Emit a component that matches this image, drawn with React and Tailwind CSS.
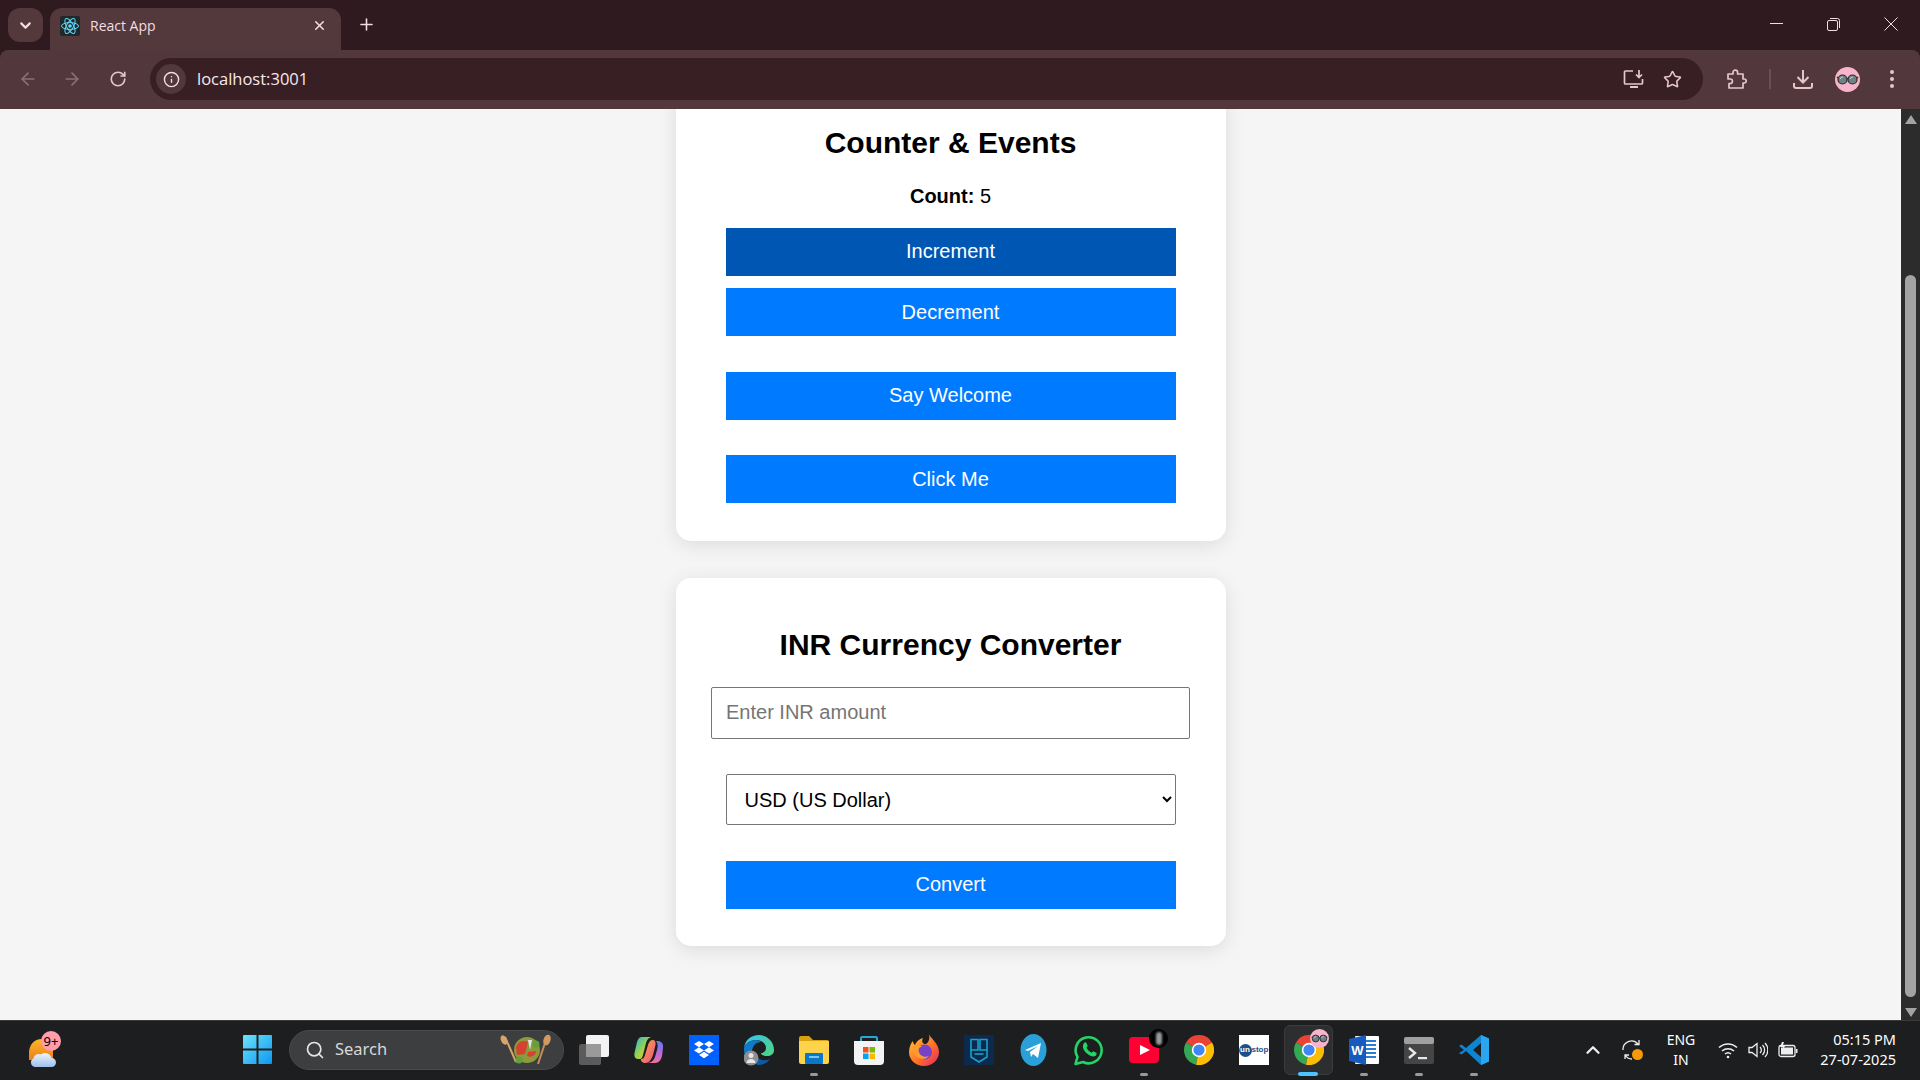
import React from "react";
import { ArrowLeft, ArrowRight, RotateCw, Info, Star, X, Plus, ChevronDown, ChevronUp, Search } from "lucide-react";

const Glasses = ({ size = 25 }) => (
  <svg width={size} height={size} viewBox="0 0 25 25">
    <circle cx="12.5" cy="12.5" r="12.5" fill="#f9b4cd" />
    <circle cx="7.5" cy="12.5" r="4.5" fill="#6f8086" stroke="#2a2a2a" strokeWidth="1.2" />
    <circle cx="17.5" cy="12.5" r="4.5" fill="#6f8086" stroke="#2a2a2a" strokeWidth="1.2" />
    <path d="M12 11.5h1.5M2 11l1-1M23 11l-1-1" stroke="#2a2a2a" strokeWidth="1.2" />
    <path d="M5 12a3 3 0 0 1 3-2M15 12a3 3 0 0 1 3-2" stroke="#cfdadd" strokeWidth="1" fill="none" />
  </svg>
);

const ReactLogo = () => (
  <svg width="20" height="20" viewBox="0 0 20 20">
    <rect width="20" height="20" rx="2" fill="#20282c" />
    <g fill="none" stroke="#61dafb" strokeWidth="1">
      <ellipse cx="10" cy="10" rx="8.5" ry="3.4" />
      <ellipse cx="10" cy="10" rx="8.5" ry="3.4" transform="rotate(60 10 10)" />
      <ellipse cx="10" cy="10" rx="8.5" ry="3.4" transform="rotate(120 10 10)" />
    </g>
    <circle cx="10" cy="10" r="1.8" fill="#61dafb" />
  </svg>
);

const InstallIcon = () => (
  <svg width="22" height="20" viewBox="0 0 22 20" fill="none" stroke="#e6c6cb" strokeWidth="1.7">
    <path d="M10 2H2.500A1 1 0 0 0 1.500 3v11a1 1 0 0 0 1 1h16a1 1 0 0 0 1-1v-4" />
    <path d="M16 1v7M13 5.500l3 3 3-3" />
    <path d="M7 18h8" strokeWidth="2" />
  </svg>
);

const PuzzleIcon = () => (
  <svg width="21" height="21" viewBox="0 0 21 21" fill="none" stroke="#e6c6cb" strokeWidth="1.7" strokeLinejoin="round">
    <path d="M2 5h5V3.500a2.300 2.300 0 0 1 4.600 0V5H17v5h1.200a2 2 0 0 1 0 4H17v5H3v-4.500h1.200a2.200 2.200 0 0 0 0-4.500H2Z" />
  </svg>
);

const DownloadIcon = () => (
  <svg width="22" height="22" viewBox="0 0 22 22" fill="none" stroke="#e6c6cb" strokeWidth="2">
    <path d="M11 2v12M5.500 9l5.500 5.500L16.500 9" />
    <path d="M2 15v3a2 2 0 0 0 2 2h14a2 2 0 0 0 2-2v-3" />
  </svg>
);

const Dots = () => (
  <svg width="6" height="20" viewBox="0 0 6 20" fill="#e6c6cb">
    <circle cx="3" cy="3" r="2" /><circle cx="3" cy="10" r="2" /><circle cx="3" cy="17" r="2" />
  </svg>
);

const ChromeLogo = ({ size = 30 }) => (
  <svg width={size} height={size} viewBox="0 0 30 30">
    <path d="M15 15 2 7.500A15 15 0 0 1 28 7.500Z" fill="#ea4335" />
    <path d="M15 15 2 7.500A15 15 0 0 0 12 29.700Z" fill="#34a853" />
    <path d="M15 15 28 7.500A15 15 0 0 1 12 29.700Z" fill="#fbbc04" />
    <circle cx="15" cy="15" r="7.200" fill="#fff" />
    <circle cx="15" cy="15" r="5.600" fill="#4285f4" />
  </svg>
);

const Start = () => (
  <svg width="29" height="29" viewBox="0 0 29 29">
    <defs>
      <linearGradient id="st" x1="0" y1="0" x2="1" y2="1"><stop offset="0" stopColor="#6ee2fb" /><stop offset="1" stopColor="#0c98f0" /></linearGradient>
    </defs>
    <path d="M0 1a1 1 0 0 1 1-1h12.500v13.500H0Zm15.500-1H28a1 1 0 0 1 1 1v12.500H15.500ZM0 15.500h13.500V29H1a1 1 0 0 1-1-1Zm15.500 0H29V28a1 1 0 0 1-1 1H15.500Z" fill="url(#st)" />
  </svg>
);

const Weather = () => (
  <svg width="28" height="30" viewBox="0 0 28 30">
    <defs>
      <linearGradient id="sun" x1="0" y1="0" x2="0" y2="1"><stop offset="0" stopColor="#fbb62c" /><stop offset="1" stopColor="#ee7f1a" /></linearGradient>
      <linearGradient id="cl" x1="0" y1="0" x2="0" y2="1"><stop offset="0" stopColor="#eef4fd" /><stop offset="1" stopColor="#9dc0ee" /></linearGradient>
    </defs>
    <path d="M13 1C5 1 0 7 0 15v7h24V8H17Z" fill="url(#sun)" />
    <path d="M6 29a4.500 4.500 0 0 1-1.500-8.500 5 5 0 0 1 7-4 7 7 0 0 1 11 3.500 4.500 4.500 0 0 1 0 9Z" fill="url(#cl)" />
  </svg>
);

const Salad = () => (
  <svg width="52" height="32" viewBox="0 0 52 32">
    <path d="M5 3 16 28" stroke="#d9a46a" strokeWidth="2" />
    <ellipse cx="4" cy="6" rx="3" ry="5" fill="#d9a46a" transform="rotate(-25 4 6)" />
    <path d="M47 3 38 30" stroke="#c98d52" strokeWidth="2" />
    <ellipse cx="47" cy="6" rx="3.500" ry="5.500" fill="#d39a60" transform="rotate(18 47 6)" />
    <circle cx="27" cy="16" r="13" fill="#8b9a3c" />
    <path d="M16 14a8 8 0 0 1 12-6l-3 12-8 1Z" fill="#d8412f" />
    <path d="M27 22a6 6 0 0 0 9-5l-8 1Z" fill="#d8412f" />
    <path d="M28 6l2 10 2-10Z" fill="#e4e4ea" />
    <circle cx="19" cy="26" r="3.500" fill="#5fa13b" />
    <circle cx="36" cy="10" r="3.500" fill="#5fa13b" />
  </svg>
);

const TaskView = () => (
  <svg width="30" height="30" viewBox="0 0 30 30">
    <rect x="0" y="9" width="22" height="21" rx="2" fill="#5b5b5b" />
    <rect x="7" y="0" width="23" height="22" rx="2" fill="#f3f3f3" />
    <rect x="7" y="9" width="15" height="13" fill="#9a9a9a" />
  </svg>
);

const Copilot = () => (
  <svg width="29" height="26" viewBox="0 0 29 26">
    <defs>
      <linearGradient id="c1" x1="0" y1="0" x2="1" y2="1"><stop offset="0" stopColor="#1eb6e8" /><stop offset="0.5" stopColor="#9ad24a" /><stop offset="1" stopColor="#f8c23c" /></linearGradient>
      <linearGradient id="c2" x1="0" y1="0" x2="0" y2="1"><stop offset="0" stopColor="#5a7df0" /><stop offset="0.5" stopColor="#b468e0" /><stop offset="1" stopColor="#f0709a" /></linearGradient>
      <linearGradient id="c3" x1="0" y1="0" x2="1" y2="1"><stop offset="0" stopColor="#f8a83a" /><stop offset="1" stopColor="#f0508a" /></linearGradient>
    </defs>
    <path d="M8 0h9c-3 1-4 3-5 6l-3 12c-.5 2-1.500 4-3 4H4c-3 0-4-3-3.500-6L3 5C4 2 5 0 8 0Z" fill="url(#c1)" />
    <path d="M13 26h8c4 0 6-3 7-7l1-8c.5-4-1-6-4-7h-3c2 3 2 5 1 9l-2 7c-1 3-4 6-8 6Z" fill="url(#c2)" />
    <path d="M7 22c2 0 3-1 4-4l3-10c1-3 2-5 5-5 2 0 3 2 2.500 5l-2 8c-1 5-4 10-8 10-3 0-5-2-4.500-4Z" fill="url(#c3)" />
  </svg>
);

const Dropbox = () => (
  <svg width="30" height="30" viewBox="0 0 30 30">
    <rect width="30" height="30" fill="#0061fe" />
    <path d="M10 6l5 3-5 3.200L5 9Zm10 0 5 3-5 3.200L15 9ZM5 15.400l5-3.200 5 3.200-5 3.200Zm15-3.200 5 3.200-5 3.200-5-3.200ZM10 20l5-3.200 5 3.200-5 3.200Z" fill="#fff" />
  </svg>
);

const Edge = () => (
  <svg width="30" height="31" viewBox="0 0 30 31">
    <defs>
      <linearGradient id="e1" x1="0" y1="0" x2="1" y2="1"><stop offset="0" stopColor="#35c1f1" /><stop offset="1" stopColor="#50d67a" /></linearGradient>
    </defs>
    <path d="M15 0a15 15 0 0 1 15 15c0 4-3 6-7 6-3 0-6-1-6-3 3 0 5-2 5-5 0-5-5-8-10-8C6 5 1 9 0 13 1 5 7 0 15 0Z" fill="url(#e1)" />
    <path d="M0 13c1-4 6-8 12-8 2 0 4 1 5 2-5 0-9 4-9 10 0 5 3 10 8 12C7 30 0 24 0 15Z" fill="#1079c8" />
    <path d="M10 18c2 6 9 9 16 6-3 4-7 6-11 6-3 0-5-2-6-5Z" fill="#0d5aa7" />
    <circle cx="7" cy="23" r="7.500" fill="#8e8e8e" />
    <circle cx="7" cy="20.500" r="2.500" fill="#e5e5e5" />
    <path d="M2.500 28a4.500 4 0 0 1 9 0Z" fill="#e5e5e5" />
  </svg>
);

const Folder = () => (
  <svg width="30" height="28" viewBox="0 0 30 28">
    <path d="M0 2a2 2 0 0 1 2-2h8l4 4H28a2 2 0 0 1 2 2v4H0Z" fill="#d9a10f" />
    <path d="M0 5h30v21a2 2 0 0 1-2 2H2a2 2 0 0 1-2-2Z" fill="#fcd34a" />
    <rect x="6" y="17" width="18" height="11" rx="1" fill="#0a78c9" />
    <rect x="10" y="20" width="10" height="2" fill="#7fc4ef" />
  </svg>
);

const Store = () => (
  <svg width="30" height="30" viewBox="0 0 30 30">
    <path d="M7 7V3a1 1 0 0 1 1-1h14a1 1 0 0 1 1 1v4" fill="none" stroke="#27a6dc" strokeWidth="2" />
    <path d="M0 6h30v20a4 4 0 0 1-4 4H4a4 4 0 0 1-4-4Z" fill="#f3f3f3" />
    <rect x="9" y="12" width="5.500" height="5.500" fill="#f25022" />
    <rect x="15.500" y="12" width="5.500" height="5.500" fill="#7fba00" />
    <rect x="9" y="18.500" width="5.500" height="5.500" fill="#00a4ef" />
    <rect x="15.500" y="18.500" width="5.500" height="5.500" fill="#ffb900" />
  </svg>
);

const Firefox = () => (
  <svg width="30" height="32" viewBox="0 0 30 32">
    <defs>
      <linearGradient id="f1" x1="0" y1="0" x2="1" y2="1"><stop offset="0" stopColor="#ffcb33" /><stop offset="0.6" stopColor="#ff6a2b" /><stop offset="1" stopColor="#e6226b" /></linearGradient>
    </defs>
    <path d="M20 0c1 4 10 9 10 18a15 14 0 0 1-30 0C0 13 2 9 4 7c0 2 1 3 2 4 1-3 4-6 8-7-2 4 0 6 3 6 3-2 4-6 3-10Z" fill="url(#f1)" />
    <circle cx="15.500" cy="18" r="7.500" fill="#7542c9" />
    <path d="M4 14c3-3 8-3 9-1-3 0-4 2-3 5 1 4 6 6 10 4-4 5-12 3-15-2-1-2-1-4-1-6Z" fill="#ff9a2e" />
  </svg>
);

const Shield = () => (
  <svg width="30" height="30" viewBox="0 0 30 30">
    <rect width="30" height="30" fill="#0c2a4d" />
    <g fill="none" stroke="#17a2c9" strokeWidth="1.600">
      <path d="M7 9V4.500h7V15H7Zm9 6V4.500h7V15h-7Z" />
      <path d="M7 15v7l8 5 8-5v-7" />
      <path d="M10.500 19h9" />
    </g>
  </svg>
);

const Telegram = () => (
  <svg width="27" height="32" viewBox="0 0 27 32">
    <ellipse cx="13.500" cy="16" rx="13" ry="16" fill="#2a9fd8" />
    <path d="M5 16l16-7-3 15-5-4-2 3-1-5 8-6-10 5Z" fill="#fff" />
  </svg>
);

const WhatsApp = () => (
  <svg width="30" height="31" viewBox="0 0 30 31" fill="none">
    <path d="M1.500 29l2-7A13 13 0 1 1 9 27Z" stroke="#25d366" strokeWidth="2.600" strokeLinejoin="round" />
    <path d="M10 8c1-1 2-1 2.500 0l1.200 3-1.200 1.700c1 2 3 4 5 5l1.700-1.400 3 1.400c.8.500.5 2-.5 3-2 1.500-5 1-9-2.500S8 11 10 8Z" fill="#25d366" />
  </svg>
);

const YouTube = () => (
  <svg width="30" height="26" viewBox="0 0 30 26">
    <rect width="30" height="26" rx="4" fill="#ff0033" />
    <path d="M11 8l10 5-10 5Z" fill="#fff" />
  </svg>
);

const Word = () => (
  <svg width="30" height="30" viewBox="0 0 30 30">
    <rect x="6" y="1" width="24" height="28" rx="1" fill="#fff" />
    <path d="M16 6h11M16 10h11M16 14h11M16 18h11M16 22h11" stroke="#2b7cd3" strokeWidth="2" />
    <path d="M0 4 17 0v30L0 26Z" fill="#185abd" />
    <text x="8.500" y="20" fontSize="13" fontWeight="700" fill="#fff" textAnchor="middle" fontFamily="Liberation Sans, sans-serif">W</text>
  </svg>
);

const Terminal = () => (
  <svg width="30" height="27" viewBox="0 0 30 27">
    <rect width="30" height="27" rx="2" fill="#454545" />
    <rect width="30" height="7" rx="2" fill="#a0a0a0" />
    <path d="M5 11l6 5-6 5" stroke="#e8e8e8" strokeWidth="2.400" fill="none" />
    <rect x="14" y="20" width="9" height="2.200" fill="#e8e8e8" />
  </svg>
);

const VSCode = () => (
  <svg width="30" height="30" viewBox="0 0 30 30">
    <path d="M22 0l8 3.500v23L22 30 7 16l-4.500 3.500L0 18l5-3-5-4 2.500-1.500L7 13Zm0 8-8 7 8 7Z" fill="#0f85d1" />
    <path d="M22 0l8 3.500v23L22 30Z" fill="#2aa5ef" />
  </svg>
);

const Unstop = () => (
  <div className="w-[30px] h-[30px] bg-white flex items-center [font-family:'Liberation_Sans',sans-serif] font-bold text-[#1c4f8c] text-[8px] leading-none">
    <span className="w-[13px] h-[13px] rounded-full bg-[#1c4f8c] text-white flex items-center justify-center shrink-0">un</span>
    <span>stop</span>
  </div>
);

const Slot = ({ children, dot }) => (
  <div className="relative w-[55px] h-[59px] flex items-center justify-center shrink-0 pb-[1px]">
    {children}
    {dot && <div className="absolute bottom-[4px] left-[23.500px] w-2 h-[3px] rounded-full bg-[#9a9a9a]" />}
  </div>
);

const SysFont = "[font-family:'Noto_Sans',sans-serif]";

function Chrome() {
  return (
    <div className="h-[109px] shrink-0 bg-[#2f1a1f] flex flex-col">
      <div className="h-[50px] flex items-end pl-2 shrink-0">
        <div className="w-[35px] h-[34px] mb-2 rounded-xl bg-[#53383c] flex items-center justify-center">
          <ChevronDown size={17} strokeWidth={3} className="text-[#f2dde0]" />
        </div>
        <div className="ml-[7px] w-[291px] h-[42px] rounded-t-xl bg-[#53383c] flex items-center pl-[10px] pr-[14px] pb-[7px]">
          <ReactLogo />
          <span className="ml-[10px] text-[14px] text-[#f2dde0] [font-family:'Open_Sans',sans-serif] flex-1">React App</span>
          <X size={15} strokeWidth={2.500} className="text-[#f2dde0]" />
        </div>
        <div className="ml-[14px] mb-[9px] w-[22px] h-[34px] flex items-center justify-center">
          <Plus size={19} strokeWidth={2} className="text-[#f2dde0]" />
        </div>
        <div className="flex-1" />
        <div className="flex h-[50px]">
          <div className="w-[57px] flex justify-center pt-[23px]"><div className="w-[13px] h-px bg-[#f2dde0]" /></div>
          <div className="w-[57px] flex justify-center pt-[18px]">
            <svg width="13" height="13" viewBox="0 0 13 13" fill="none" stroke="#f2dde0"><rect x="0.500" y="2.500" width="10" height="10" rx="1.500" /><path d="M3 .5h7.500a2 2 0 0 1 2 2V10" /></svg>
          </div>
          <div className="w-[58px] flex justify-center pt-[17px]">
            <svg width="14" height="14" viewBox="0 0 14 14" stroke="#f2dde0" strokeWidth="1"><path d="M.5.5l13 13M13.500.5l-13 13" /></svg>
          </div>
        </div>
      </div>
      <div className="h-[59px] bg-[#52373c] rounded-t-lg flex items-center pb-[1px]">
        <ArrowLeft size={20} strokeWidth={2} className="ml-[18px] text-[#8a7175]" />
        <ArrowRight size={20} strokeWidth={2} className="ml-[24px] text-[#8a7175]" />
        <RotateCw size={18} strokeWidth={2.200} className="ml-[27px] text-[#e6c6cb]" />
        <div className="ml-[23px] w-[1553px] h-[42px] rounded-full bg-[#371f24] flex items-center pl-[6px]">
          <div className="w-[30px] h-[30px] rounded-full bg-[#52373c] flex items-center justify-center">
            <Info size={17} strokeWidth={2} className="text-[#f2dde0]" />
          </div>
          <span className="ml-[11px] text-[16.5px] text-[#f7e8ea] [font-family:'Open_Sans',sans-serif] flex-1">localhost:3001</span>
          <InstallIcon />
          <Star size={19} strokeWidth={2} className="ml-[18px] mr-[21px] text-[#e6c6cb]" />
        </div>
        <div className="ml-[23px]"><PuzzleIcon /></div>
        <div className="ml-[22px] w-[2px] h-5 bg-[#6b4f54]" />
        <div className="ml-[21px]"><DownloadIcon /></div>
        <div className="ml-[21px]"><Glasses /></div>
        <div className="ml-[29px]"><Dots /></div>
      </div>
    </div>
  );
}

const btn = "block w-[450px] h-[48px] bg-[#007bff] text-white text-[20px] text-center";

function Page() {
  return (
    <div className="flex-1 flex min-h-0">
      <div className="flex-1 min-w-0 bg-[#f5f5f5] overflow-hidden flex flex-col items-center [font-family:'Liberation_Sans',Arial,sans-serif] text-black">
        <div className="w-[550px] shrink-0 -mt-[20px] bg-white rounded-[15px] shadow-[0_4px_20px_rgba(0,0,0,0.1)] flex flex-col items-center pt-[36px] pb-[38px]">
          <h2 className="text-[30px] leading-[36px] font-bold">Counter &amp; Events</h2>
          <p className="mt-[24px] text-[20px] leading-[23px]"><b>Count:</b> 5</p>
          <button className="mt-[20px] block w-[450px] h-[48px] bg-[#0056b3] text-white text-[20px] pb-[2px] text-center">Increment</button>
          <button className={"mt-[12px] " + btn}>Decrement</button>
          <button className={"mt-[36px] pb-[2px] " + btn}>Say Welcome</button>
          <button className={"mt-[35px] " + btn}>Click Me</button>
        </div>
        <div className="w-[550px] shrink-0 mt-[37px] bg-white rounded-[15px] shadow-[0_4px_20px_rgba(0,0,0,0.1)] flex flex-col items-center pt-[49px] pb-[37px]">
          <h2 className="text-[30px] leading-[36px] font-bold">INR Currency Converter</h2>
          <input readOnly placeholder="Enter INR amount" className="mt-[24px] w-[479px] h-[52px] border border-[#767676] rounded-[2px] bg-white px-[14px] pb-[2px] text-[20px] placeholder:text-[#757575] outline-none" />
          <select className="mt-[35px] w-[450px] h-[51px] border border-[#767676] rounded-[2px] bg-white pl-[14px] text-[20px] text-black">
            <option>USD (US Dollar)</option>
            <option>EUR (Euro)</option>
          </select>
          <button className={"mt-[36px] pb-[2px] " + btn}>Convert</button>
        </div>
      </div>
      <div className="w-[19px] shrink-0 bg-[#2c2c2c] flex flex-col items-center pt-[6px] pb-[3px]">
        <svg width="12" height="9" viewBox="0 0 12 9" className="shrink-0"><path d="M6 0l6 9H0Z" fill="#a3a3a3" /></svg>
        <div className="mt-[151px] w-[11px] h-[722px] rounded-full bg-[#a3a3a3] shrink-0" />
        <div className="flex-1" />
        <svg width="12" height="9" viewBox="0 0 12 9" className="shrink-0"><path d="M6 9l6-9H0Z" fill="#a3a3a3" /></svg>
      </div>
    </div>
  );
}

function Taskbar() {
  return (
    <div className={"h-[60px] shrink-0 bg-[#1c1e20] border-t border-[#3a3a3a] flex items-center text-white " + SysFont}>
      <div className="relative ml-[29px] w-[28px] h-[36px] mb-[2px] flex items-end shrink-0">
        <Weather />
        <div className="absolute -top-[1px] left-[12px] w-[20px] h-[20px] rounded-full bg-[#ff9dab] text-black text-[13px] leading-[20px] text-center">9+</div>
      </div>
      <div className="ml-[186px] mb-[2px] shrink-0"><Start /></div>
      <div className="ml-[17px] mb-[2px] w-[275px] h-[40px] rounded-full bg-[#3d3e40] border border-[#4a4a4a] flex items-center pl-[15px] pr-[11px] shrink-0">
        <Search size={20} strokeWidth={2} className="text-[#e5e5e5]" />
        <span className="ml-[10px] text-[16.5px] text-[#d8d8d8] flex-1">Search</span>
        <Salad />
      </div>
      <div className="ml-[2px] flex shrink-0">
        <Slot><TaskView /></Slot>
        <Slot><Copilot /></Slot>
        <Slot><Dropbox /></Slot>
        <Slot><Edge /></Slot>
        <Slot dot><Folder /></Slot>
        <Slot><Store /></Slot>
        <Slot><Firefox /></Slot>
        <Slot><Shield /></Slot>
        <Slot><Telegram /></Slot>
        <Slot><WhatsApp /></Slot>
        <Slot dot>
          <YouTube />
          <div className="absolute top-[8px] left-[33px] w-[19px] h-[19px] rounded-full bg-black flex items-center justify-center">
            <div className="w-[6px] h-[13px] rounded-full bg-[#9a9a9a] blur-[1px]" />
          </div>
        </Slot>
        <Slot><ChromeLogo /></Slot>
        <Slot><Unstop /></Slot>
        <Slot>
          <div className="absolute top-[4px] left-[3px] w-[49px] h-[50px] rounded-md bg-[#2c2e30] border border-[#3a3c3e]" />
          <div className="relative"><ChromeLogo /></div>
          <div className="absolute top-[8px] left-[29px]"><Glasses size={19} /></div>
          <div className="absolute bottom-[4px] left-[17px] w-[20px] h-[4px] rounded-full bg-[#4cc2ff]" />
        </Slot>
        <Slot dot><Word /></Slot>
        <Slot dot><Terminal /></Slot>
        <Slot dot><VSCode /></Slot>
      </div>
      <div className="ml-[81px] mb-[2px] shrink-0"><ChevronUp size={22} strokeWidth={2.500} className="text-[#f0f0f0]" /></div>
      <div className="ml-[17px] mb-[2px] shrink-0 relative w-[22px] h-[22px]">
        <svg width="22" height="22" viewBox="0 0 22 22" fill="none" stroke="#eee" strokeWidth="1.300">
          <path d="M2 11a8.500 8.500 0 0 1 15-6M18 1v4.500h-4.500M4 20v-4h4M4 16a8.500 8.500 0 0 0 7 4" />
        </svg>
        <div className="absolute right-0 bottom-[1px] w-[11px] h-[11px] rounded-full bg-[#f59a0c]" />
      </div>
      <div className="ml-[18px] mb-[2px] w-[40px] text-center text-[14px] leading-[20px] shrink-0">ENG<br />IN</div>
      <div className="ml-[17px] mb-[2px] shrink-0">
        <svg width="20" height="18" viewBox="0 0 20 18" fill="none" stroke="#eee" strokeWidth="1.500"><path d="M1 6.500a13 13 0 0 1 18 0M4 10a9 9 0 0 1 12 0M7 13a4.500 4.500 0 0 1 6 0" /><circle cx="10" cy="16" r="1.300" fill="#eee" stroke="none" /></svg>
      </div>
      <div className="ml-[10px] mb-[2px] shrink-0">
        <svg width="20" height="18" viewBox="0 0 20 18" fill="none" stroke="#eee" strokeWidth="1.300"><path d="M1 6.500h3L9 2.500v13L4 11.500H1Z" /><path d="M12 6a4 4 0 0 1 0 6M14.500 4a7 7 0 0 1 0 10M17 2a10 10 0 0 1 0 14" /></svg>
      </div>
      <div className="ml-[10px] mb-[2px] shrink-0">
        <svg width="20" height="18" viewBox="0 0 20 18"><rect x="1" y="4.500" width="16" height="11" rx="2" fill="none" stroke="#eee" strokeWidth="1.300" /><rect x="3" y="6.500" width="12" height="7" fill="#eee" /><rect x="18" y="8" width="1.500" height="4" fill="#eee" /><path d="M4 1 2 6h3l-1 3 4-5H5l1-3Z" fill="#eee" /></svg>
      </div>
      <div className="ml-[19px] mb-[4px] w-[79px] text-right text-[14.5px] leading-[20px] whitespace-nowrap shrink-0">05:15 PM<br />27-07-2025</div>
    </div>
  );
}

export default function App() {
  return (
    <div className="w-[1920px] h-[1080px] flex flex-col overflow-hidden">
      <Chrome />
      <Page />
      <Taskbar />
    </div>
  );
}
